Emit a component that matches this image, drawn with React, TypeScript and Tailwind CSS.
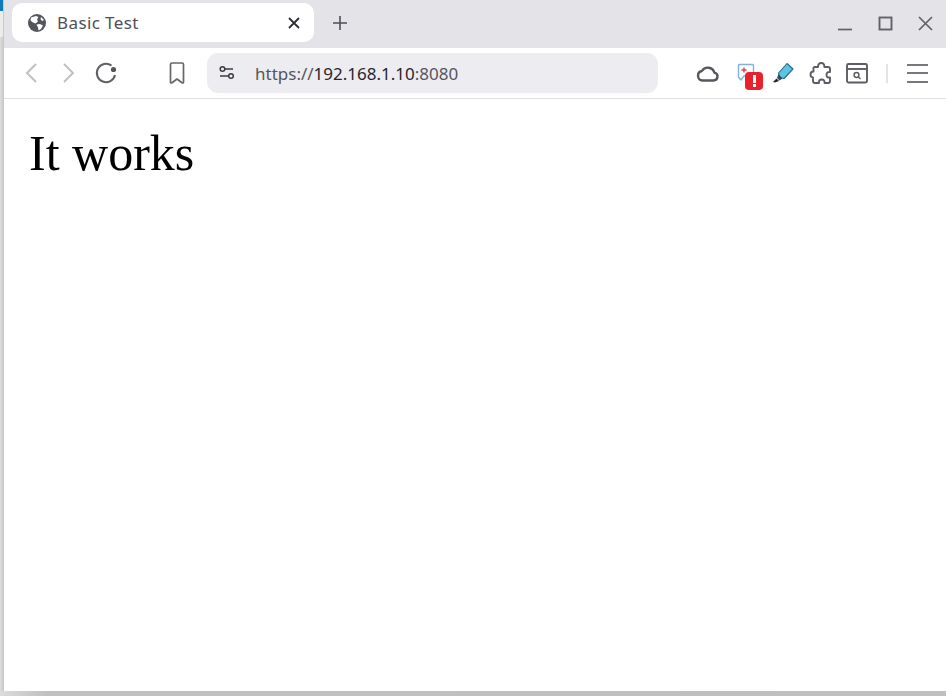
const uiFont = { fontFamily: '"Noto Sans", sans-serif' };

function Globe() {
  return (
    <svg width="18" height="18" viewBox="0 0 18 18">
      <circle cx="9" cy="9" r="9" fill="#54565c" />
      <path d="M3 3.5 L8 2 L10.5 3 L9 5.5 L10 7.5 L7.5 9.5 L5 8.5 L2.5 6.5 Z" fill="#fff" />
      <path d="M8.5 10.5 L12 10 L15 11.5 L13 15 L10.5 16.5 L10 13.5 Z" fill="#fff" />
      <path d="M13 3 L16 6 L14 7 L12.5 5 Z" fill="#fff" />
    </svg>
  );
}

function Stroke({ w = 24, h = 24, color = "#5b5b66", sw = 2, children }: { w?: number; h?: number; color?: string; sw?: number; children: React.ReactNode }) {
  return (
    <svg width={w} height={h} viewBox={`0 0 ${w} ${h}`} fill="none" stroke={color} strokeWidth={sw}>
      {children}
    </svg>
  );
}

function Toolbar() {
  return (
    <div className="flex h-[51px] items-center border-b border-[#e0e0e2] bg-white">
      <div className="ml-[16px] flex h-6 w-6 items-center justify-center">
        <Stroke color="#c0c0c3"><path d="M16 3 L7 12 L16 21" /></Stroke>
      </div>
      <div className="ml-[12px] flex h-6 w-6 items-center justify-center">
        <Stroke color="#c0c0c3"><path d="M8 3 L17 12 L8 21" /></Stroke>
      </div>
      <div className="ml-[14px] flex h-6 w-6 items-center justify-center">
        <Stroke color="#5f5f66">
          <path d="M17.5 4.5 A9.2 9.2 0 1 0 21 14" />
          <circle cx="19.5" cy="8.5" r="2.6" fill="#55555c" stroke="none" />
        </Stroke>
      </div>
      <div className="ml-[47px] flex h-6 w-6 items-center justify-center">
        <Stroke color="#66666c">
          <path d="M5.5 3.5 Q5.5 2 7 2 H17 Q18.5 2 18.5 3.5 V21 Q18.5 22.5 17 21.8 L12 18 L7 21.8 Q5.5 22.5 5.5 21 Z" strokeWidth="1.7" strokeLinejoin="round" />
        </Stroke>
      </div>
      <div className="ml-[18px] flex h-10 w-[451px] items-center rounded-[11px] bg-[#edecf1]">
        <div className="ml-[11px] flex w-[18px] items-center justify-center">
          <Stroke w={18} h={18} color="#3b3b42" sw={1.5}>
            <circle cx="4.5" cy="5" r="2.3" />
            <path d="M7 5 H15" />
            <circle cx="13" cy="12" r="2.3" />
            <path d="M2 12 H10.5" />
          </Stroke>
        </div>
        <div className="ml-[19px] text-[17px] leading-none text-[#55555b]" style={uiFont}>
          https://<span className="text-[#26262b]">192.168.1.10</span>:8080
        </div>
      </div>
      <div className="ml-[38px] flex h-6 w-6 items-center justify-center">
        <Stroke w={24} h={24} color="#57575e" sw={2.4}>
          <path d="M6.5 19.5 H17.5 A4 4 0 0 0 18.4 11.6 A6.9 6.9 0 0 0 5.9 10 A4.8 4.8 0 0 0 6.5 19.5 Z" strokeLinejoin="round" />
        </Stroke>
      </div>
      <div className="relative ml-[13px] flex h-6 w-6 items-center justify-center">
        <svg width="22" height="22" viewBox="0 0 22 22" fill="none">
          <path d="M5.5 2.5 H18.5 Q19.5 2.5 19.5 3.5 V14 H10 L7 18 L4.5 15 V3.5 Q4.5 2.5 5.5 2.5 Z" stroke="#7fb2dc" strokeWidth="1.4" strokeLinejoin="round" />
          <path d="M7.5 8 H12.5 M10 5.5 V10.5" stroke="#e2404a" strokeWidth="1.4" />
        </svg>
        <div className="absolute left-[12px] top-[11px] flex h-[18px] w-[18px] items-center justify-center rounded-[4px] bg-[#e8212c]">
          <div className="flex flex-col items-center gap-[1.5px]">
            <span className="h-[8px] w-[3px] bg-white" />
            <span className="h-[3px] w-[3px] bg-white" />
          </div>
        </div>
      </div>
      <div className="ml-[13px] flex h-6 w-6 items-center justify-center">
        <svg width="24" height="24" viewBox="0 0 24 24">
          <path d="M8.5 12 L17 2.5 L23 8 L14 17.5 L9.5 16.5 Z" fill="#5cc3e2" stroke="#2a6c88" strokeWidth="1.1" strokeLinejoin="round" />
          <path d="M8.5 13 L12.5 17.5 L9.5 19.5 L7 17 Z" fill="#2f4f60" />
          <path d="M6.5 17.5 L9 20 L5 21.5 L3 21 Z" fill="#22272c" />
        </svg>
      </div>
      <div className="ml-[15px] flex h-6 w-6 items-center justify-center">
        <Stroke w={24} h={24} color="#5c5c63" sw={1.9}>
          <path d="M9 6 Q9 2 12.2 2 Q15.4 2 15.4 6 H19 Q21 6 21 8 V11 Q17.5 10.5 17.5 14 Q17.5 17 21 16.5 V20 Q21 22 19 22 H15.5 Q16 18.5 12.6 18.5 Q9.5 18.5 10 22 H6 Q4 22 4 20 V16.5 Q1.5 16.5 1.5 13.5 Q1.5 10.5 4.5 10.5 V8 Q4 6 6 6 Z" strokeLinejoin="round" />
        </Stroke>
      </div>
      <div className="ml-[12px] flex h-6 w-6 items-center justify-center">
        <Stroke w={24} h={24} color="#5c5c63" sw={1.9}>
          <rect x="2" y="3" width="20" height="18.5" rx="1.5" />
          <path d="M2 8 H22" />
          <circle cx="11.5" cy="14" r="2.4" strokeWidth="1.5" />
          <path d="M13.5 16 L15.5 18" strokeWidth="1.5" />
        </Stroke>
      </div>
      <div className="ml-[17px] h-[19px] w-[2px] bg-[#e3e3e8]" />
      <div className="ml-[19px] flex w-[21px] flex-col gap-[6.5px]">
        <span className="h-[2px] bg-[#77777d]" />
        <span className="h-[2px] bg-[#77777d]" />
        <span className="h-[2px] bg-[#77777d]" />
      </div>
    </div>
  );
}

export default function App() {
  return (
    <div className="flex h-[696px] w-[946px] flex-col overflow-hidden bg-[#d8d8d8]">
      <div className="flex min-h-0 flex-1">
        <div className="flex w-[4px] flex-col bg-gradient-to-r from-[#dedede] to-[#c6c6c6]">
          <div className="h-[11px] w-[3px] bg-[#0f7bb8]" />
          <div className="h-[26px] w-[3px] bg-[#ececec]" />
        </div>
        <div className="flex min-w-0 flex-1 flex-col bg-white">
          <div className="flex h-[48px] items-center bg-[#e3e3e8] pb-[3px]">
            <div className="ml-[8px] flex h-[39px] w-[302px] items-center rounded-[10px] bg-white">
              <div className="ml-[16px] mt-[1px]"><Globe /></div>
              <div className="ml-[11px] flex-1 text-[17px] leading-none tracking-[0.4px] text-[#4f4f55]" style={uiFont}>Basic Test</div>
              <div className="mr-[13px] mt-[1px]">
                <Stroke w={14} h={14} color="#2d2d33" sw={1.8}><path d="M2 2 L12 12 M12 2 L2 12" /></Stroke>
              </div>
            </div>
            <div className="ml-[19px]">
              <Stroke w={14} h={14} color="#4f4f56" sw={1.6}><path d="M7 0 V14 M0 7 H14" /></Stroke>
            </div>
            <div className="ml-auto mr-[13px] mt-[2px] flex items-center gap-[25px]">
              <Stroke w={15} h={15} color="#616168" sw={1.7}><path d="M0 13.5 H14" /></Stroke>
              <Stroke w={15} h={15} color="#616168" sw={1.9}><rect x="1.5" y="1.5" width="12" height="12" /></Stroke>
              <Stroke w={15} h={15} color="#616168" sw={1.7}><path d="M1 1 L14 14 M14 1 L1 14" /></Stroke>
            </div>
          </div>
          <Toolbar />
          <div className="flex-1 bg-white pl-[25px] pt-[23px]">
            <div className="text-[50px] leading-[62px] text-black" style={{ fontFamily: '"Liberation Serif", serif' }}>It works</div>
          </div>
        </div>
      </div>
      <div className="h-[5px] bg-gradient-to-r from-[#dcdcdc] via-[#c0c0c0] via-[5%] to-[#bfbfbf]" />
    </div>
  );
}
